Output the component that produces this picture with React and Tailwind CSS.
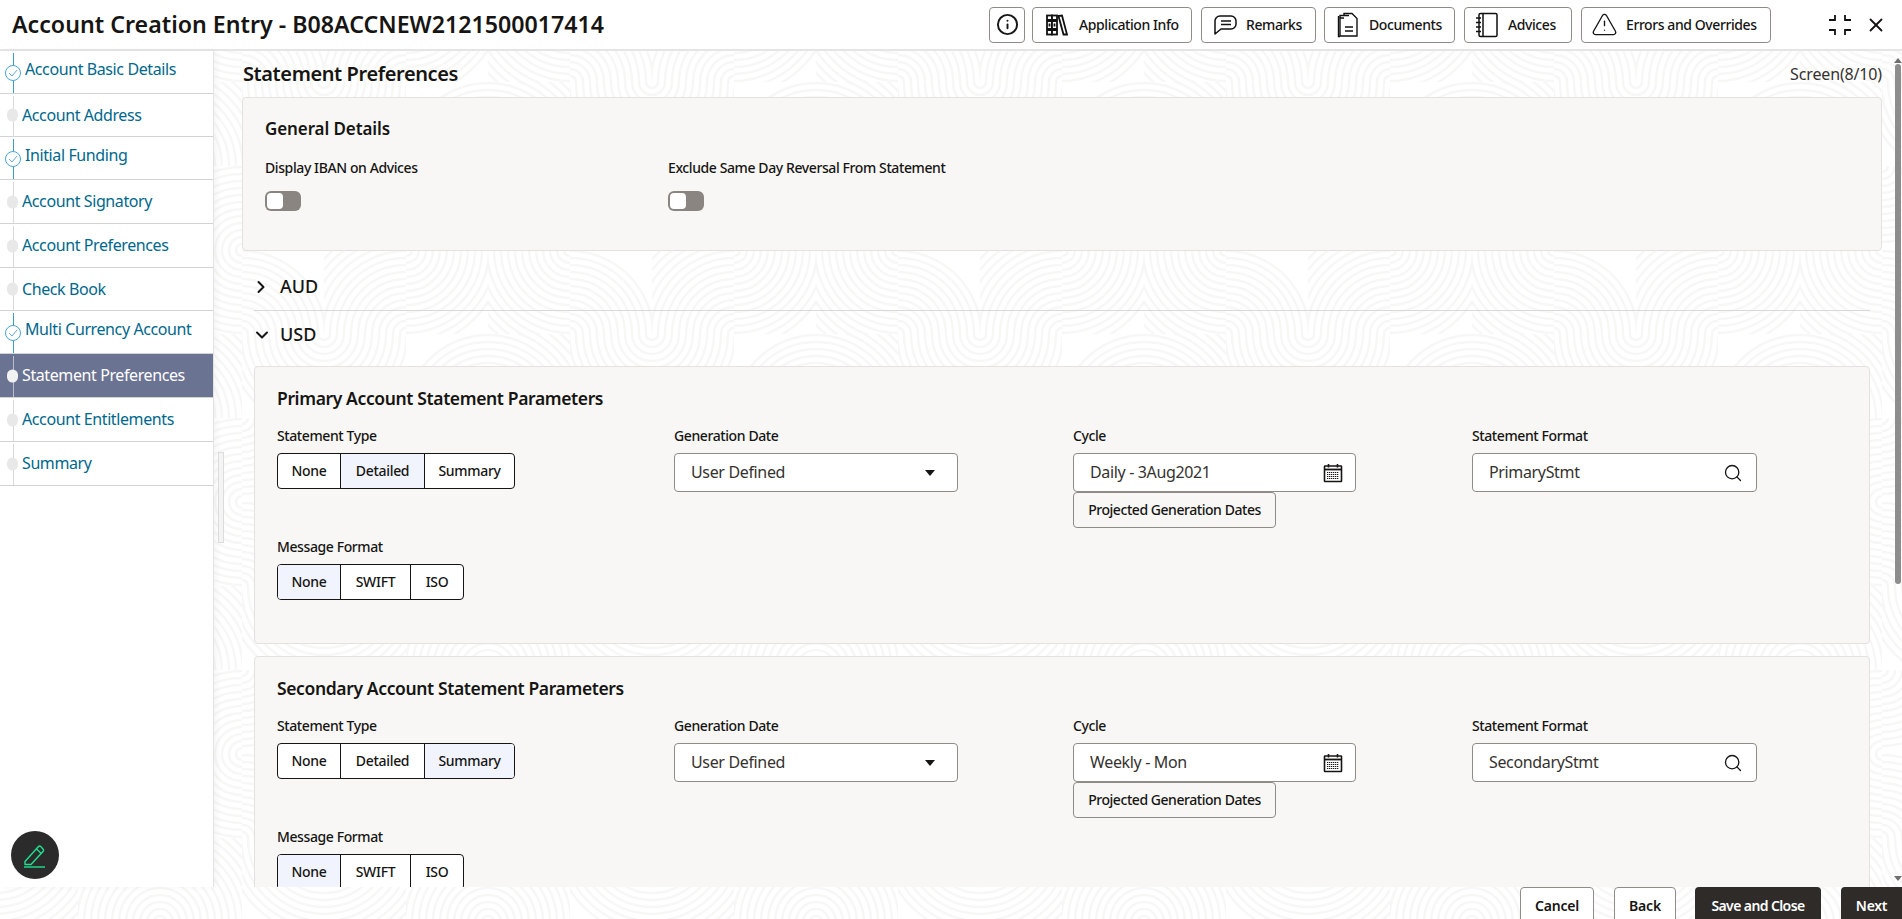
import { ChevronDown, ChevronRight, Info, Search, TriangleAlert, X } from "lucide-react";

const steps = [
  { label: "Account Basic Details", done: true, height: "h-[43px]" },
  { label: "Account Address", height: "h-[43px]" },
  { label: "Initial Funding", done: true, height: "h-[43px]" },
  { label: "Account Signatory", height: "h-[44px]" },
  { label: "Account Preferences", height: "h-[44px]" },
  { label: "Check Book", height: "h-[43px]" },
  { label: "Multi Currency Account", done: true, height: "h-[43px]" },
  { label: "Statement Preferences", active: true, height: "h-[44px]" },
  { label: "Account Entitlements", height: "h-[44px]" },
  { label: "Summary", height: "h-[44px]" },
];

const patternCells = [
  [82, 84, 120], [0, 0, 100], [82, 0, 150], [0, 84, 90],
  [0, 0, 150], [82, 84, 90], [0, 84, 130], [82, 0, 100],
  [82, 0, 90], [0, 84, 150], [82, 84, 120], [0, 0, 80],
];

const statementTypes = [
  { label: "None", width: "w-[62px]" },
  { label: "Detailed", width: "w-[84px]" },
  { label: "Summary", width: "w-[90px]" },
];

const messageFormats = [
  { label: "None", width: "w-[62px]" },
  { label: "SWIFT", width: "w-[70px]" },
  { label: "ISO", width: "w-[53px]" },
];

function Pattern() {
  const radii = [];
  for (let r = 6; r < 160; r += 7) radii.push(r);

  return (
    <svg className="absolute inset-0 h-full w-full" aria-hidden="true">
      <defs>
        <pattern id="arcs" width="328" height="252" patternUnits="userSpaceOnUse" x="-4" y="-2">
          {patternCells.map(([cx, cy, max], i) => (
            <svg key={i} x={(i % 4) * 82} y={Math.floor(i / 4) * 84} width="82" height="84">
              {radii
                .filter((r) => r < max)
                .map((r) => (
                  <circle key={r} cx={cx} cy={cy} r={r} fill="none" stroke="#f7f7f6" strokeWidth="2.5" />
                ))}
            </svg>
          ))}
        </pattern>
      </defs>
      <rect width="100%" height="100%" fill="url(#arcs)" />
    </svg>
  );
}

function ShelfIcon() {
  return (
    <svg width="24" height="24" viewBox="0 0 24 24" fill="none" stroke="#111" strokeWidth="1.8">
      <rect x="2" y="2.5" width="5" height="19" fill="#fff" />
      <rect x="7" y="2.5" width="5" height="19" fill="#fff" />
      <path d="M13.5 3 17 2.5l5 19h-3.5z" />
      <path d="M2 7.5h10M2 16.5h10" strokeWidth="3" />
      <path d="M4.5 10.5v3M9.5 10.5v3" />
    </svg>
  );
}

function BubbleIcon() {
  return (
    <svg width="26" height="24" viewBox="0 0 26 24" fill="none" stroke="#111" strokeWidth="1.5">
      <path d="M8 3h11a5 5 0 0 1 5 5v3a5 5 0 0 1-5 5H9l-6 5V8a5 5 0 0 1 5-5z" strokeLinejoin="round" />
      <path d="M9 8h10M9 11.5h10" />
    </svg>
  );
}

function DocsIcon() {
  return (
    <svg width="22" height="26" viewBox="0 0 22 26" fill="none" stroke="#111" strokeWidth="1.4">
      <path d="M3 6V3.5h9" />
      <path d="M1.5 7V4" />
      <path d="M7 3 V1.5h8l5 5V24H3V6h4" />
      <path d="M8 15h8M8 19h8" strokeWidth="1.6" />
      <path d="M1.5 7v17.5H3" />
    </svg>
  );
}

function NotebookIcon() {
  return (
    <svg width="24" height="26" viewBox="0 0 24 26" fill="none" stroke="#111" strokeWidth="1.5">
      <rect x="4" y="1.5" width="18" height="23" rx="1.5" />
      <path d="M8 1.5v23" />
      <path d="M1 6h5M1 10.5h5M1 15h5M1 19.5h5" strokeWidth="1.3" />
    </svg>
  );
}

function CalendarIcon() {
  return (
    <svg width="20" height="20" viewBox="0 0 20 20" fill="none" stroke="#161513">
      <rect x="1.5" y="3" width="17" height="15.5" rx="0.5" strokeWidth="1.6" />
      <path d="M1.5 6.5h17" strokeWidth="1.8" />
      <path d="M5.5 1v3.5M14.5 1v3.5" strokeWidth="1.6" />
      <path d="M4 9.5h12M4 11.5h12M4 13.5h12M4 15.5h12" strokeWidth="1.2" strokeDasharray="1.3 0.7" />
    </svg>
  );
}

function CompressIcon() {
  return (
    <svg width="24" height="22" viewBox="0 0 24 22" fill="none" stroke="#111" strokeWidth="1.8">
      <path d="M7 1v5H1M17 1v5h6M7 21v-5H1M17 21v-5h6" />
    </svg>
  );
}

function PenIcon() {
  return (
    <svg width="24" height="26" viewBox="0 0 24 26" fill="none" stroke="#1fe08f" strokeWidth="1.4">
      <path d="M2 19.5 15.5 4.5a1.5 1.5 0 0 1 2.2 0l2.5 2.7a1.5 1.5 0 0 1 0 2L8 22.5H2z" strokeLinejoin="round" />
      <path d="M13.5 7l4.8 4.4" />
      <path d="M1 25h21" />
    </svg>
  );
}

function StepRow({ step }) {
  return (
    <div
      className={`relative flex shrink-0 items-center border-b border-[#d3d3d3] ${step.height} ${step.active ? "bg-[#6b7392]" : ""}`}
    >
      <span
        className={`absolute bottom-0 left-[13px] top-[2px] w-px ${step.done ? "bg-[#3c9ccb]" : step.active ? "bg-[#b9bdcc]" : "bg-[#d9d9d9]"}`}
      />
      {step.done ? (
        <span className="absolute left-[5px] top-[14px] flex h-4 w-4 items-center justify-center rounded-full border border-[#4aa5dc] bg-white">
          <svg width="10" height="8" viewBox="0 0 10 8" fill="none" stroke="#6aa6d6" strokeWidth="1">
            <path d="M1 4l3 3 5-6" />
          </svg>
        </span>
      ) : (
        <span
          className={`absolute left-[7px] top-1/2 h-[13px] w-[11px] -translate-y-1/2 rounded-full ${step.active ? "bg-[#f2f2f2]" : "bg-[#e8e8e8]"}`}
        />
      )}
      <span
        className={`mb-px text-[16px] leading-5 tracking-[-0.4px] ${step.done ? "ml-[25px] -mt-[5px] text-[#00688c]" : step.active ? "ml-[22px] text-white" : "ml-[22px] text-[#00688c]"}`}
      >
        {step.label}
      </span>
    </div>
  );
}

function HeaderButton({ icon, label, className }) {
  return (
    <button
      className={`flex h-9 shrink-0 items-center rounded border border-[#8f8c88] bg-white text-[14px] font-medium tracking-[-0.42px] text-[#161513] ${className}`}
      type="button"
    >
      {icon}
      <span>{label}</span>
    </button>
  );
}

function Segmented({ options, selected }) {
  return (
    <div className="flex h-9 w-fit overflow-hidden rounded border border-[#161513] bg-white">
      {options.map((option, i) => (
        <div
          key={option.label}
          className={`flex items-center justify-center pb-[2px] text-[14px] font-medium tracking-[-0.3px] text-[#161513] ${option.width} ${i > 0 ? "border-l border-[#161513]" : ""} ${option.label === selected ? "bg-[#f1f4fc]" : ""}`}
        >
          {option.label}
        </div>
      ))}
    </div>
  );
}

function FieldLabel({ children }) {
  return <p className="text-[14px] font-medium leading-[18px] tracking-[-0.4px] text-[#161513]">{children}</p>;
}

function TextBox({ value, width, children }) {
  return (
    <div
      className={`flex h-[39px] items-center justify-between rounded border border-[#8f8c88] bg-white pl-4 pr-3 text-[16px] tracking-[-0.35px] text-[#35322f] ${width}`}
    >
      <span className="pb-px">{value}</span>
      {children}
    </div>
  );
}

function ParamsCard({ title, type, cycle, format }) {
  return (
    <section className="h-[278px] shrink-0 rounded border border-[#e4e2df] bg-[#f8f7f5] pl-[22px] pt-[19px]">
      <h3 className="text-[17.5px] font-semibold leading-6 tracking-[-0.37px] text-[#161513]">{title}</h3>
      <div className="mt-[17px] grid h-[111px] grid-cols-[397px_399px_399px_auto]">
        <div>
          <FieldLabel>Statement Type</FieldLabel>
          <div className="mt-2">
            <Segmented options={statementTypes} selected={type} />
          </div>
        </div>
        <div>
          <FieldLabel>Generation Date</FieldLabel>
          <div className="mt-2">
            <TextBox value="User Defined" width="w-[284px]">
              <svg width="10" height="6" viewBox="0 0 10 6" className="mr-[10px]">
                <path d="M0 0h10L5 6z" fill="#161513" />
              </svg>
            </TextBox>
          </div>
        </div>
        <div>
          <FieldLabel>Cycle</FieldLabel>
          <div className="mt-2">
            <TextBox value={cycle} width="w-[283px]">
              <CalendarIcon />
            </TextBox>
            <button
              className="flex h-9 w-[203px] items-center justify-center rounded border border-[#8f8c88] bg-[#f8f7f5] pb-px text-[14px] font-medium tracking-[-0.45px] text-[#161513]"
              type="button"
            >
              Projected Generation Dates
            </button>
          </div>
        </div>
        <div>
          <FieldLabel>Statement Format</FieldLabel>
          <div className="mt-2">
            <TextBox value={format} width="w-[285px]">
              <Search size={20} strokeWidth={1.6} className="mr-[1px] text-[#161513]" />
            </TextBox>
          </div>
        </div>
      </div>
      <FieldLabel>Message Format</FieldLabel>
      <div className="mt-2">
        <Segmented options={messageFormats} selected="None" />
      </div>
    </section>
  );
}

function SwitchField({ label }) {
  return (
    <div>
      <p className="text-[14px] font-medium leading-5 tracking-[-0.4px] text-[#161513]">{label}</p>
      <div className="mt-[13px] flex h-5 w-9 items-center rounded-md bg-[#8a8580] p-[2px]">
        <span className="h-4 w-4 rounded bg-white" />
      </div>
    </div>
  );
}

function CurrencyRow({ label, open, className }) {
  return (
    <div className={`mx-3 flex items-center ${className}`}>
      {open ? (
        <ChevronDown size={20} strokeWidth={2.4} className="-ml-[2px] text-[#161513]" />
      ) : (
        <ChevronRight size={20} strokeWidth={2.4} className="-ml-[3px] mr-px text-[#161513]" />
      )}
      <span className="ml-2 text-[18px] font-medium text-[#161513]">{label}</span>
    </div>
  );
}

export default function App() {
  return (
    <div
      className="relative flex h-[919px] w-full flex-col overflow-hidden bg-white text-[#161513]"
      style={{ fontFamily: '"Noto Sans", Arial, sans-serif' }}
    >
      <Pattern />

      <header className="relative z-10 flex h-[51px] shrink-0 items-center border-b-2 border-[#e5e5e5] bg-white pl-3">
        <h1 className="text-[23.2px] font-semibold leading-none">
          Account Creation Entry - B08ACCNEW2121500017414
        </h1>
        <div className="ml-auto flex items-center">
          <HeaderButton className="w-9 justify-center" icon={<Info size={23} strokeWidth={2} />} />
          <HeaderButton
            className="ml-[7px] w-[160px] pl-3"
            icon={<span className="mr-[10px] flex"><ShelfIcon /></span>}
            label="Application Info"
          />
          <HeaderButton
            className="ml-[9px] w-[115px] pl-[10px]"
            icon={<span className="mr-[8px] flex"><BubbleIcon /></span>}
            label="Remarks"
          />
          <HeaderButton
            className="ml-2 w-[131px] pl-3"
            icon={<span className="mr-[10px] flex"><DocsIcon /></span>}
            label="Documents"
          />
          <HeaderButton
            className="ml-[9px] w-[108px] pl-[10px]"
            icon={<span className="mr-[9px] flex"><NotebookIcon /></span>}
            label="Advices"
          />
          <HeaderButton
            className="ml-[9px] w-[190px] pl-[9px]"
            icon={<TriangleAlert size={27} strokeWidth={1.2} className="mr-[8px]" />}
            label="Errors and Overrides"
          />
          <span className="ml-[57px] flex">
            <CompressIcon />
          </span>
          <X size={22} strokeWidth={2} className="ml-[13px] mr-[15px]" />
        </div>
      </header>

      <div className="relative flex min-h-0 flex-1">
        <aside className="relative z-10 flex w-[214px] shrink-0 flex-col border-r border-[#e3e3e3] bg-white shadow-[3px_0_6px_rgba(0,0,0,0.04)]">
          {steps.map((step) => (
            <StepRow key={step.label} step={step} />
          ))}
          <span className="absolute bottom-[8px] left-[11px] flex h-12 w-12 items-center justify-center rounded-full bg-[#2b2b2b]">
            <PenIcon />
          </span>
        </aside>

        <main className="relative min-w-0 flex-1 overflow-hidden pl-[28px] pr-[20px]">
          <span className="absolute left-[4px] top-[401px] z-10 h-[91px] w-[6px] border border-[#dcdcdc] bg-[#f4f4f4]" />
          <div className="flex h-[46px] items-center justify-between pl-px">
            <h2 className="text-[20px] font-semibold tracking-[-0.4px]">Statement Preferences</h2>
            <span className="text-[16px] tracking-[-0.15px] text-[#35322f]">Screen(8/10)</span>
          </div>

          <section className="flex h-[154px] flex-col rounded border border-[#e4e2df] bg-[#f8f7f5] pl-[22px] pt-[19px]">
            <h3 className="text-[17px] font-semibold leading-6 tracking-[-0.1px]">General Details</h3>
            <div className="mt-[17px] grid grid-cols-[403px_auto]">
              <SwitchField label="Display IBAN on Advices" />
              <SwitchField label="Exclude Same Day Reversal From Statement" />
            </div>
          </section>

          <CurrencyRow label="AUD" className="mt-[13px] h-[47px] border-b border-[#d9d9d9] pb-px" />
          <CurrencyRow label="USD" open className="h-[46px] pt-px" />

          <div className="mx-3 mt-[9px] flex flex-col gap-3">
            <ParamsCard
              title="Primary Account Statement Parameters"
              type="Detailed"
              cycle="Daily - 3Aug2021"
              format="PrimaryStmt"
            />
            <ParamsCard
              title="Secondary Account Statement Parameters"
              type="Summary"
              cycle="Weekly - Mon"
              format="SecondaryStmt"
            />
          </div>

          <div className="absolute bottom-0 right-0 top-[7px] flex w-[8px] flex-col items-center">
            <svg width="8" height="5" viewBox="0 0 8 5"><path d="M4 0l4 5H0z" fill="#6f6f6f" /></svg>
            <span className="mt-[1px] h-[520px] w-[6px] rounded-sm bg-[#8d8d8d]" />
            <svg width="8" height="5" viewBox="0 0 8 5" className="mb-[6px] mt-auto"><path d="M4 5l4-5H0z" fill="#6f6f6f" /></svg>
          </div>
        </main>
      </div>

      <footer className="relative z-10 flex h-[32px] shrink-0 items-start justify-end overflow-hidden">
        <button className="h-9 w-[74px] rounded border border-[#8f8c88] bg-white text-[14px] font-semibold tracking-[-0.2px]" type="button">
          Cancel
        </button>
        <button className="ml-5 h-9 w-[62px] rounded border border-[#8f8c88] bg-white text-[14px] font-semibold tracking-[-0.2px]" type="button">
          Back
        </button>
        <button className="ml-[19px] h-9 w-[126px] rounded bg-[#2e2b28] text-[14px] font-semibold tracking-[-0.6px] text-white" type="button">
          Save and Close
        </button>
        <button className="ml-5 h-9 w-[61px] rounded-l bg-[#2e2b28] text-[14px] font-semibold tracking-[-0.3px] text-white" type="button">
          Next
        </button>
      </footer>
    </div>
  );
}
